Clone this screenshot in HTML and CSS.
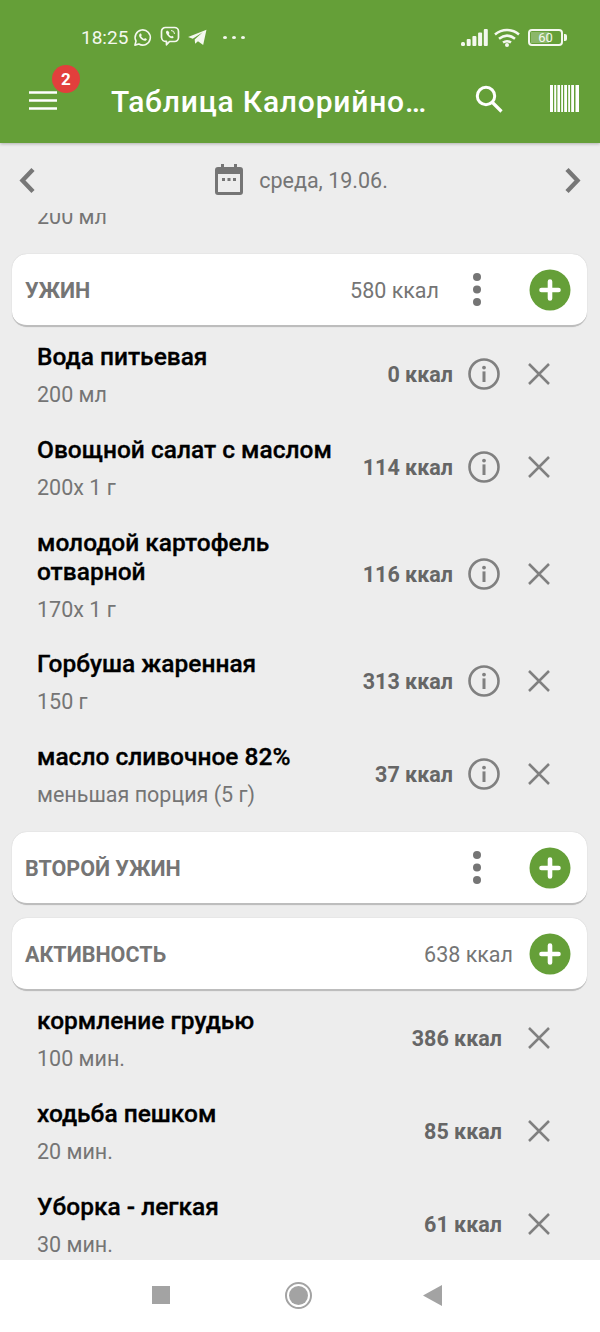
FILE: index.html
```html
<!DOCTYPE html>
<html lang="ru">
<head>
<meta charset="utf-8">
<title>Таблица Калорийности</title>
<link rel="stylesheet" href="styles.css">
</head>
<body>
<svg class="sprite" aria-hidden="true">
  <symbol id="info" viewBox="0 0 32 32">
    <circle cx="16" cy="16" r="14.5" fill="none" stroke="currentColor" stroke-width="2.6"/>
    <circle cx="16" cy="9.6" r="1.9" fill="currentColor"/>
    <rect x="14.5" y="13.4" width="3" height="10.6" fill="currentColor"/>
  </symbol>
  <symbol id="close" viewBox="0 0 24 24">
    <path d="M2 2 22 22M22 2 2 22" fill="none" stroke="currentColor" stroke-width="2.5"/>
  </symbol>
  <symbol id="plus" viewBox="0 0 42 42">
    <circle cx="21" cy="21" r="20.5" fill="#659f38"/>
    <path d="M21 12.500V29.500M12.500 21H29.500" fill="none" stroke="#fff" stroke-width="4.600" stroke-linecap="round"/>
  </symbol>
  <symbol id="dots" viewBox="0 0 10 36">
    <circle cx="5" cy="5" r="4" fill="currentColor"/>
    <circle cx="5" cy="17.5" r="4" fill="currentColor"/>
    <circle cx="5" cy="30" r="4" fill="currentColor"/>
  </symbol>
</svg>
<div class="phone">
  <header class="appbar">
    <div class="status">
      <span class="time">18:25</span>
      <svg class="st-wa" viewBox="0 0 20 20"><path d="M2 18 3.2 13.8A8 8 0 1 1 6.2 16.9Z" fill="none" stroke="currentColor" stroke-width="1.7" stroke-linejoin="round"/><path d="M7 6.2C6 7.2 6.3 9 7.800 10.800S11.800 13.800 13.300 13.300C14.300 13 14.800 12 14.500 11.600L12.600 10.600 11.700 11.600C10.500 11.200 9 9.800 8.500 8.500L9.300 7.500 8.400 5.900C8 5.700 7.400 5.800 7 6.200Z" fill="currentColor"/></svg>
      <svg class="st-vb" viewBox="0 0 20 22"><path d="M5.500 1.500H14.500A4 4 0 0 1 18.500 5.500V11.500A4 4 0 0 1 14.500 15.500H9.500L6.500 18.800V15.400A4.500 4.500 0 0 1 1.500 11.500V5.500A4 4 0 0 1 5.500 1.500Z" fill="none" stroke="currentColor" stroke-width="1.7" stroke-linejoin="round"/><path d="M6.500 5C5.700 5.700 5.800 7 7 8.800S10.500 12.300 12 12.300C13 12.300 13.800 11.500 13.700 11L12.200 9.800 11.200 10.500C10.200 10 9.200 9 8.800 8L9.500 7 8.200 5C7.700 4.700 7 4.700 6.500 5Z" fill="currentColor"/><path d="M11 4.500A3.500 3.500 0 0 1 14.500 8" fill="none" stroke="currentColor" stroke-width="1"/></svg>
      <svg class="st-tg" viewBox="0 0 20 18"><path d="M0 8.500 19.500 .8 16 17 10.500 13 7.500 15.500 7 11 15.500 3.500 5 10.300Z" fill="currentColor"/></svg>
      <span class="st-more"><i></i><i></i><i></i></span>
      <span class="st-right">
        <svg class="st-sig" viewBox="0 0 27 17"><g fill="currentColor"><rect x="0" y="13" width="4" height="4" rx="1.500"/><rect x="5.700" y="10" width="4" height="7" rx="1"/><rect x="11.400" y="7" width="4" height="10" rx="1"/><rect x="17.100" y="3.500" width="4" height="13.500" rx="1"/><rect x="22.800" y="0" width="4" height="17" rx="1"/></g></svg>
        <svg class="st-wifi" viewBox="0 0 26 19"><g fill="none" stroke="currentColor" stroke-width="2.500"><path d="M1 6.500C8 .5 18 .5 25 6.500"/><path d="M5 10.800C10 6.800 16 6.800 21 10.800"/><path d="M9 14.600C11.500 12.800 14.500 12.800 17 14.600"/></g><circle cx="13" cy="17" r="2" fill="currentColor"/></svg>
        <span class="battery"><span class="battery-fill"></span><span class="battery-num">60</span></span>
      </span>
    </div>
    <div class="toolbar">
      <div class="menu">
        <svg class="burger" viewBox="0 0 28 19"><path d="M0 1.500H28M0 9.500H28M0 17.500H28" stroke="currentColor" stroke-width="2.600"/></svg>
        <span class="badge">2</span>
      </div>
      <h1 class="title">Таблица Калорийности</h1>
      <svg class="search" viewBox="0 0 28 28"><circle cx="11" cy="11" r="8.700" fill="none" stroke="currentColor" stroke-width="3"/><path d="M17.500 17.500 26.500 26.500" stroke="currentColor" stroke-width="3.200"/></svg>
      <svg class="barcode" viewBox="0 0 29 27"><path d="M0 0H3V27H0ZM4.200 0H6.200V27H4.200ZM7.400 0H10V27H7.400ZM11.200 0H13V27H11.200ZM14.200 0H17V27H14.200ZM18.200 0H20V27H18.200ZM21.200 0H24V27H21.200ZM25.500 0H29V27H25.500Z" fill="currentColor"/></svg>
    </div>
  </header>

  <nav class="datebar">
    <svg class="chev" viewBox="0 0 17 27"><path d="M14 2.500 3.500 13.500 14 24.500" fill="none" stroke="currentColor" stroke-width="4.400"/></svg>
    <div class="date">
      <svg class="cal" viewBox="0 0 28 31"><path d="M6 0H9V3H19V0H22V3H25A3 3 0 0 1 28 6V28A3 3 0 0 1 25 31H3A3 3 0 0 1 0 28V6A3 3 0 0 1 3 3H6ZM3 10V28H25V10ZM7 14H10V17H7ZM12.500 14H15.500V17H12.500ZM18 14H21V17H18Z" fill="currentColor" fill-rule="evenodd"/></svg>
      <span>среда, 19.06.</span>
    </div>
    <svg class="chev" viewBox="0 0 17 27"><path d="M3 2.500 13.500 13.500 3 24.500" fill="none" stroke="currentColor" stroke-width="4.400"/></svg>
  </nav>

  <main class="list">
    <div class="list-inner">
      <div class="row">
        <div class="food"><div class="name">Вода питьевая</div><div class="sub">200 мл</div></div>
        <span class="kcal">0 ккал</span>
        <svg class="i-info"><use href="#info"/></svg>
        <svg class="i-close"><use href="#close"/></svg>
      </div>

      <section class="card">
        <span class="card-title">УЖИН</span>
        <span class="card-kcal">580 ккал</span>
        <svg class="i-dots"><use href="#dots"/></svg>
        <svg class="i-plus"><use href="#plus"/></svg>
      </section>

      <div class="rows">
        <div class="row">
          <div class="food"><div class="name">Вода питьевая</div><div class="sub">200 мл</div></div>
          <span class="kcal">0 ккал</span>
          <svg class="i-info"><use href="#info"/></svg>
          <svg class="i-close"><use href="#close"/></svg>
        </div>
        <div class="row">
          <div class="food"><div class="name">Овощной салат с маслом</div><div class="sub">200x 1 г</div></div>
          <span class="kcal">114 ккал</span>
          <svg class="i-info"><use href="#info"/></svg>
          <svg class="i-close"><use href="#close"/></svg>
        </div>
        <div class="row">
          <div class="food"><div class="name name-wrap">молодой картофель отварной</div><div class="sub">170x 1 г</div></div>
          <span class="kcal">116 ккал</span>
          <svg class="i-info"><use href="#info"/></svg>
          <svg class="i-close"><use href="#close"/></svg>
        </div>
        <div class="row">
          <div class="food"><div class="name">Горбуша жаренная</div><div class="sub">150 г</div></div>
          <span class="kcal">313 ккал</span>
          <svg class="i-info"><use href="#info"/></svg>
          <svg class="i-close"><use href="#close"/></svg>
        </div>
        <div class="row">
          <div class="food"><div class="name">масло сливочное 82%</div><div class="sub">меньшая порция (5 г)</div></div>
          <span class="kcal">37 ккал</span>
          <svg class="i-info"><use href="#info"/></svg>
          <svg class="i-close"><use href="#close"/></svg>
        </div>
      </div>

      <section class="card">
        <span class="card-title">ВТОРОЙ УЖИН</span>
        <svg class="i-dots"><use href="#dots"/></svg>
        <svg class="i-plus"><use href="#plus"/></svg>
      </section>

      <section class="card card-activity">
        <span class="card-title">АКТИВНОСТЬ</span>
        <span class="card-kcal">638 ккал</span>
        <svg class="i-plus"><use href="#plus"/></svg>
      </section>

      <div class="rows rows-activity">
        <div class="row">
          <div class="food"><div class="name">кормление грудью</div><div class="sub">100 мин.</div></div>
          <span class="kcal">386 ккал</span>
          <svg class="i-close"><use href="#close"/></svg>
        </div>
        <div class="row">
          <div class="food"><div class="name">ходьба пешком</div><div class="sub">20 мин.</div></div>
          <span class="kcal">85 ккал</span>
          <svg class="i-close"><use href="#close"/></svg>
        </div>
        <div class="row">
          <div class="food"><div class="name">Уборка - легкая</div><div class="sub">30 мин.</div></div>
          <span class="kcal">61 ккал</span>
          <svg class="i-close"><use href="#close"/></svg>
        </div>
      </div>
    </div>
  </main>

  <footer class="navbar">
    <span class="nav-square"></span>
    <span class="nav-home"><span></span></span>
    <svg class="nav-back" viewBox="0 0 19 21"><path d="M19 0V21L0 10.500Z" fill="currentColor"/></svg>
  </footer>
</div>
</body>
</html>
```
FILE: styles.css
```css
* { box-sizing: border-box; }
html, body { margin: 0; padding: 0; }
body { font-family: Roboto, "Noto Sans", sans-serif; background: #ededed; }
.sprite { display: none; }
.phone { width: 600px; height: 1332px; display: flex; flex-direction: column; overflow: hidden; background: #ededed; }

.appbar { height: 143px; flex: none; background: #659f38; color: #f4f8ef; box-shadow: 0 1px 3px rgba(0,0,0,.25); position: relative; z-index: 2; }
.status { height: 64px; padding: 10px 37px 0 81px; display: flex; align-items: center; }
.time { font-size: 19px; width: 52px; }
.st-wa { width: 19px; height: 19px; }
.st-vb { width: 20px; height: 22px; margin-left: 8px; }
.st-tg { width: 19px; height: 17px; margin-left: 8px; }
.st-more { display: flex; gap: 5px; margin-left: 16px; }
.st-more i { width: 4px; height: 3px; border-radius: 50%; background: currentColor; }
.st-right { margin-left: auto; display: flex; align-items: center; }
.st-sig { width: 27px; height: 17px; }
.st-wifi { width: 26px; height: 19px; margin-left: 6px; }
.battery { width: 35px; height: 17px; margin-left: 8px; border: 2px solid currentColor; border-radius: 4px; position: relative; display: flex; align-items: center; justify-content: center; }
.battery::after { content: ""; position: absolute; right: -6px; top: 3px; width: 3px; height: 7px; background: currentColor; border-radius: 0 2px 2px 0; }
.battery-fill { position: absolute; left: 1px; top: 1px; bottom: 1px; width: 18px; background: rgba(255,255,255,.25); }
.battery-num { font-size: 13px; line-height: 13px; position: relative; }

.toolbar { height: 79px; display: flex; align-items: center; padding: 0 22px 4px 29px; color: #fff; }
.menu { width: 82px; height: 40px; flex: none; display: flex; align-items: center; position: relative; }
.burger { width: 28px; height: 19px; margin-top: -2px; }
.badge { position: absolute; left: 23px; top: -17px; width: 28px; height: 28px; border-radius: 50%; background: #e23f3c; color: #fff; font-size: 17px; font-weight: 700; display: flex; align-items: center; justify-content: center; }
.title { margin: 0; width: 316px; flex: none; font-size: 30px; font-weight: 500; letter-spacing: .8px; white-space: nowrap; overflow: hidden; text-overflow: ellipsis; }
.search { width: 28px; height: 28px; margin-left: 48px; margin-top: -6px; flex: none; }
.barcode { width: 29px; height: 27px; margin-left: 47px; margin-top: -6px; flex: none; }

.datebar { height: 70px; flex: none; display: flex; align-items: center; justify-content: space-between; padding: 4px 19px 0; color: #777; }
.chev { width: 17px; height: 27px; flex: none; }
.date { display: flex; align-items: center; gap: 16px; font-size: 21.500px; padding-left: 3px; color: #757575; }
.cal { width: 28px; height: 31px; margin-top: -2px; }

.list { flex: 1; overflow: hidden; min-height: 0; }
.list-inner { margin-top: -63px; }

.card { height: 73px; margin: 11px 13px 0 12px; padding: 0 16px 0 13px; background: #fff; border-radius: 15px; border-bottom: 2px solid #bdbdbd; box-shadow: 0 0 1px #bbb; display: flex; align-items: center; }
.card-title { font-size: 21.500px; font-weight: 700; margin-right: auto; margin-top: 2px; color: #757575; }
.card-kcal { font-size: 21.500px; margin-top: 2px; color: #757575; }
.i-dots { width: 10px; height: 36px; margin-left: 33px; margin-right: 47px; flex: none; color: #757575; }
.i-plus { width: 42px; height: 42px; flex: none; }
.card-activity { margin-top: 13px; }
.card-activity .card-kcal { margin-right: 16px; }
.rows { padding-top: 1px; }

.row { min-height: 93px; padding: 13.500px 49px 13.500px 37px; display: flex; align-items: center; }
.food { flex: 1; min-width: 0; }
.name { font-size: 24.500px; font-weight: 500; line-height: 29px; color: #000; -webkit-text-stroke: .3px #000; white-space: nowrap; }
.name-wrap { white-space: normal; width: 260px; }
.sub { font-size: 21.500px; line-height: 24px; color: #757575; margin-top: 12px; }
.kcal { font-size: 21.500px; font-weight: 700; color: #666; white-space: nowrap; flex: none; }
.i-info { width: 32px; height: 32px; margin: -2px 27px 0 15px; flex: none; color: #808080; }
.i-close { width: 24px; height: 24px; margin-top: -2px; flex: none; color: #808080; }
.rows-activity .kcal { margin-right: 25px; }

.navbar { height: 72px; flex: none; background: #fff; display: flex; align-items: center; justify-content: center; color: #a3a3a3; padding: 0 7px 2px 0; position: relative; z-index: 2; }
.nav-square { width: 18px; height: 18px; background: #a3a3a3; margin-right: 115px; margin-left: 1px; }
.nav-home { width: 27px; height: 27px; border-radius: 50%; border: 2px solid #a3a3a3; padding: 2px; margin-right: 111px; display: block; }
.nav-home span { display: block; width: 100%; height: 100%; background: #a3a3a3; border-radius: 50%; }
.nav-back { width: 19px; height: 21px; }
```
